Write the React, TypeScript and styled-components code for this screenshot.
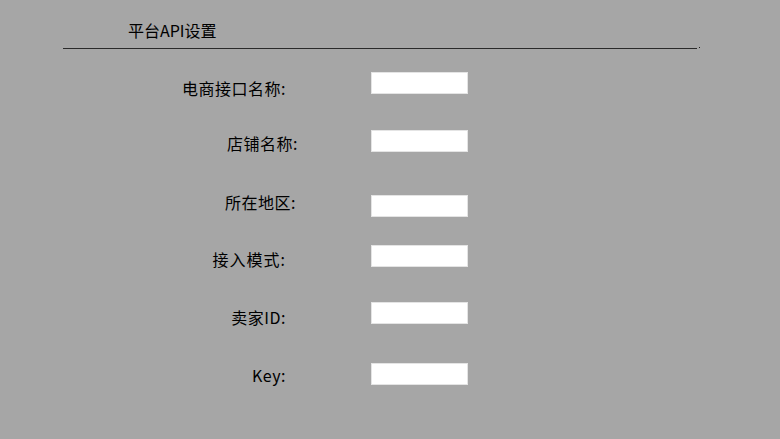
import React from 'react';
import styled, { createGlobalStyle } from 'styled-components';

const GlobalStyle = createGlobalStyle`
  html, body {
    margin: 0;
    padding: 0;
    background: #a6a6a6;
  }
  body {
    font-family: "Noto Sans CJK SC", "Noto Sans", sans-serif;
  }
`;

// top: gap above the input, shift: how far the label's right edge moves, offset: label drop vs input
const FIELDS = [
  { label: '电商接口名称:', top: 23, shift: 0, spacing: 0.5, offset: 5 },
  { label: '店铺名称:', top: 36, shift: 12, spacing: 0.5, offset: 2 },
  { label: '所在地区:', top: 43, shift: 10, spacing: 0.5, offset: -4 },
  { label: '接入模式:', top: 28, shift: 0, spacing: 1, offset: 3 },
  { label: '卖家ID:', top: 35, shift: 0, spacing: 0.5, offset: 4 },
  { label: 'Key:', top: 39, shift: 0, spacing: 0.5, offset: 1 },
];

const App = () => {
  return (
    <Page>
      <GlobalStyle />
      <Header>
        <Title>平台API设置</Title>
      </Header>
      <Divider>
        <Line />
        <Dot />
      </Divider>
      <Form>
        {FIELDS.map((f) => (
          <Row key={f.label} $top={f.top}>
            <Label $shift={f.shift} $spacing={f.spacing} $offset={f.offset}>
              {f.label}
            </Label>
            <Input type='text' />
          </Row>
        ))}
      </Form>
    </Page>
  );
};

export default App;

const Page = styled.div`
  width: 780px;
  height: 439px;
  background: #a6a6a6;
  overflow: hidden;
`;

const Header = styled.div`
  padding: 20px 0 0 128px;
  height: 28px;
`;

const Title = styled.h2`
  margin: 0;
  font-size: 16px;
  line-height: 20px;
  font-weight: 400;
  color: #000;
`;

const Divider = styled.div`
  display: flex;
  align-items: flex-start;
  padding-left: 63px;
  height: 1px;
`;

const Line = styled.div`
  width: 634px;
  height: 1px;
  background: #2a2a2a;
`;

const Dot = styled.div`
  width: 1px;
  height: 1px;
  margin: -1px 0 0 2px;
  background: #222;
`;

const Form = styled.div`
  display: flex;
  flex-direction: column;
`;

const Row = styled.div<{ $top: number }>`
  display: flex;
  align-items: flex-start;
  height: 22px;
  margin-top: ${({ $top }) => $top}px;
`;

const Label = styled.label<{ $shift: number; $spacing: number; $offset: number }>`
  width: ${({ $shift }) => 286 + $shift}px;
  margin-right: ${({ $shift }) => 85 - $shift}px;
  margin-top: ${({ $offset }) => $offset}px;
  text-align: right;
  font-size: 16px;
  line-height: 22px;
  font-weight: 400;
  letter-spacing: ${({ $spacing }) => $spacing}px;
  color: #000;
  white-space: nowrap;
`;

const Input = styled.input`
  box-sizing: border-box;
  flex-shrink: 0;
  width: 97px;
  height: 22px;
  margin: 0;
  padding: 0 4px;
  border: 1px solid #e4e4e4;
  background: #fff;
  outline: none;
`;
